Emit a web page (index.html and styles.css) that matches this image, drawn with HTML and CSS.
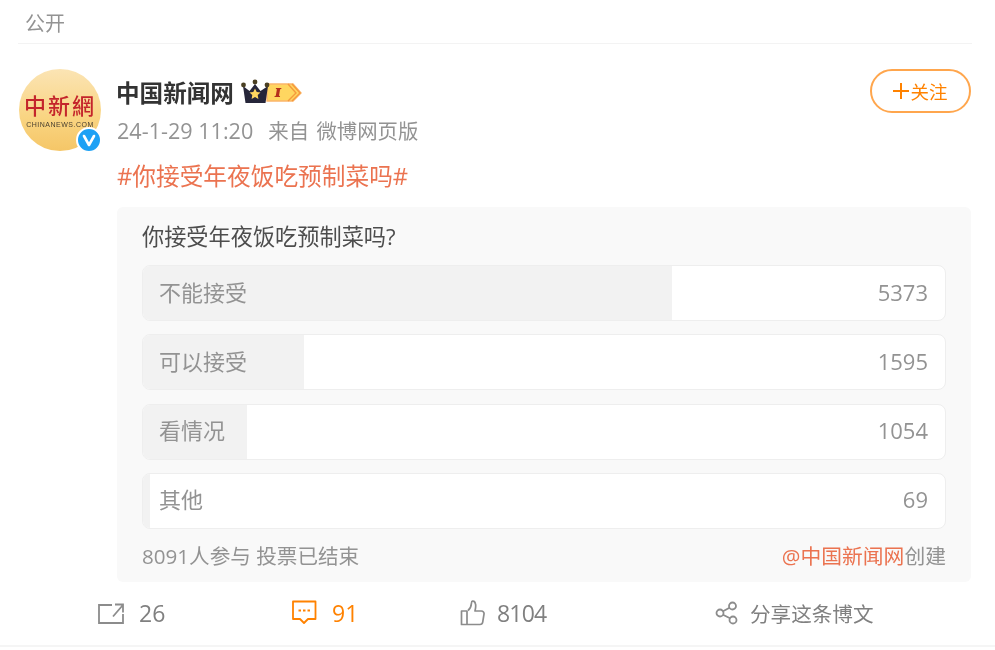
FILE: index.html
```html
<!DOCTYPE html>
<html lang="zh-CN">
<head>
    <meta charset="UTF-8">
    <title>中国新闻网</title>
    <link rel="stylesheet" href="styles.css">
</head>
<body>
    <div class="page">
        <div class="container">
            <div class="visibility">公开</div>

            <div class="post-head">
                <div class="avatar">
                    <div class="avatar-logo">中新網</div>
                    <div class="avatar-site">CHINANEWS.COM</div>
                    <div class="verified">
                        <svg width="18" height="18" viewBox="0 0 18 18"><path d="M4 5l5 9 5-9" fill="none" stroke="#fff" stroke-width="2.6" stroke-linejoin="round" stroke-linecap="round"/></svg>
                    </div>
                </div>
                <div class="author">
                    <div class="name-row">
                        <span class="name">中国新闻网</span>
                        <svg class="crown" width="62" height="26" viewBox="0 0 62 26">
                            <path d="M26 5h26l8 9-8 8H26z" fill="#ffd660" stroke="#fbb56a" stroke-width="1.4"/>
                            <path d="M51 5l8 9-8 8M47 5l8 9-8 8" fill="none" stroke="#f59a3c" stroke-width="1.400"/>
                            <path d="M2 7l6.500 5 5.500-7 5.500 7 7.500-5-2.500 17H4.500z" fill="#26263a"/>
                            <circle cx="2.500" cy="6" r="2.400" fill="#4a3f22"/>
                            <circle cx="14" cy="3" r="2.400" fill="#4a3f22"/>
                            <circle cx="26" cy="6" r="2.400" fill="#4a3f22"/>
                            <path d="M14 9.500l1.700 3.500 3.800.5-2.800 2.600.7 3.800-3.400-1.900-3.400 1.900.7-3.800-2.800-2.600 3.800-.5z" fill="#ffd660"/>
                            <path d="M35 9h5.500l-.3 1.100-1.100.2-1.100 6.400 1.100.2-.2 1.100H33.400l.3-1.100 1.100-.2 1.100-6.400-1.100-.2z" fill="#b5301c"/>
                        </svg>
                    </div>
                    <div class="meta"><span class="date">24-1-29 11:20</span><span class="source">来自 微博网页版</span></div>
                </div>
                <button class="follow" type="button"><span class="plus"></span>关注</button>
            </div>

            <div class="topic">#你接受年夜饭吃预制菜吗#</div>

            <div class="poll">
                <div class="poll-title">你接受年夜饭吃预制菜吗?</div>
                <div class="option">
                    <div class="option-fill" style="width: 65.9%"></div>
                    <span class="option-label">不能接受</span>
                    <span class="option-count">5373</span>
                </div>
                <div class="option">
                    <div class="option-fill" style="width: 20.1%"></div>
                    <span class="option-label">可以接受</span>
                    <span class="option-count">1595</span>
                </div>
                <div class="option">
                    <div class="option-fill" style="width: 13%"></div>
                    <span class="option-label">看情况</span>
                    <span class="option-count">1054</span>
                </div>
                <div class="option">
                    <div class="option-fill" style="width: 0.9%"></div>
                    <span class="option-label">其他</span>
                    <span class="option-count">69</span>
                </div>
                <div class="poll-foot">
                    <span>8091人参与 投票已结束</span>
                    <span class="creator"><span class="accent">@中国新闻网</span>创建</span>
                </div>
            </div>

            <div class="actions">
                <div class="action action-repost">
                    <svg width="28" height="26" viewBox="0 0 28 26" fill="none" stroke="#8c8c8c" stroke-width="1.800"><path d="M15 5H2v18h24V14"/><path d="M16 16.500L25.500 5.500M18 4.500h8v8"/></svg>
                    <span>26</span>
                </div>
                <div class="action action-comment">
                    <svg width="26" height="26" viewBox="0 0 26 26" fill="none" stroke="#ff8200" stroke-width="1.800" stroke-linejoin="round"><path d="M2 1.500h22.500v17.500H17l-4 4-4-4H2z"/><path d="M7.500 10.500h2.500M12 10.500h2.500M16.500 10.500h2.500"/></svg>
                    <span class="active">91</span>
                </div>
                <div class="action action-like">
                    <svg width="25" height="26" viewBox="0 0 25 26" fill="none" stroke="#8c8c8c" stroke-width="1.700" stroke-linejoin="round"><path d="M7 11h-5.500v13.500H7zM7 24.500h13c1.500 0 2.500-1 2.700-2.300l1.300-8c.3-1.800-.9-3.200-2.700-3.200h-6.300c.6-2.500 1-5 .5-7-.4-1.800-1.500-3-3-2.800-.9.100-1 1-1.100 2.300-.2 3-1.700 5.700-3.400 7"/></svg>
                    <span class="like-count">8104</span>
                </div>
                <div class="action action-share">
                    <svg width="24" height="24" viewBox="0 0 24 24" fill="none" stroke="#8c8c8c" stroke-width="1.800"><circle cx="17.500" cy="5" r="3.500"/><circle cx="5" cy="12" r="3.500"/><circle cx="18" cy="19" r="3.500"/><path d="M8 10.300l6.500-3.600M8 13.700l7 3.600"/></svg>
                    <span class="share-text">分享这条博文</span>
                </div>
            </div>
        </div>
    </div>
</body>
</html>
```

FILE: styles.css
```css
body {
    font-family: "Open Sans", "Noto Sans CJK SC", sans-serif;
    margin: 0;
    background: #fff;
    color: #333;
}
.page {
    height: 645px;
    border-bottom: 2px solid #f5f5f5;
    filter: blur(0.35px);
}
.container {
    width: 954px;
    margin-left: 18px;
}
.visibility {
    height: 42px;
    padding: 1px 0 0 7px;
    line-height: 46px;
    font-size: 20px;
    color: #939393;
    border-bottom: 1px solid #f3f3f3;
}
.post-head {
    display: flex;
    margin: 25px 1px 0 0;
    padding-left: 1px;
}
.avatar {
    position: relative;
    width: 82px;
    height: 82px;
    border-radius: 50%;
    background: linear-gradient(#fbe4b4, #f9d481 60%, #f5c667);
    display: flex;
    flex-direction: column;
    align-items: center;
    justify-content: center;
}
.avatar-logo {
    font-family: "Noto Sans CJK TC", sans-serif;
    font-weight: 500;
    font-size: 22px;
    line-height: 25px;
    letter-spacing: 2px;
    color: #c4252b;
    margin-bottom: 4px;
}
.avatar-site {
    font-family: "Liberation Sans", sans-serif;
    font-size: 7px;
    line-height: 8px;
    color: #4a4030;
    letter-spacing: 0.5px;
}
.verified {
    position: absolute;
    right: -1px;
    bottom: -2px;
    width: 22px;
    height: 22px;
    border: 2px solid #fff;
    border-radius: 50%;
    background: #1da1f5;
    display: flex;
    align-items: center;
    justify-content: center;
}
.author {
    flex: 1;
    margin-left: 15px;
}
.name-row {
    display: flex;
    align-items: center;
    height: 44px;
    margin-top: 1px;
}
.name {
    font-size: 23.600px;
    font-weight: 700;
    color: #333;
}
.crown {
    margin-left: 7px;
}
.meta {
    display: flex;
    align-items: baseline;
    gap: 15px;
    padding-left: 1px;
    font-size: 20.400px;
    line-height: 28px;
    color: #939393;
    margin-top: 3px;
}
.date {
    font-size: 21.600px;
}
.source {
    word-spacing: 2px;
}
.follow {
    width: 101px;
    height: 44px;
    font-family: inherit;
    font-size: 18.500px;
    color: #ff8200;
    background: #fff;
    border: 2px solid #ffa64d;
    border-radius: 22px;
    padding: 0;
    display: flex;
    align-items: center;
    justify-content: center;
}
.plus {
    width: 16px;
    height: 16px;
    margin-right: 1px;
    background:
        linear-gradient(#ff8200, #ff8200) center / 16px 2px no-repeat,
        linear-gradient(#ff8200, #ff8200) center / 2px 16px no-repeat;
}
.topic {
    margin: 9px 0 0 99px;
    font-size: 23.700px;
    line-height: 32px;
    color: #eb7350;
}
.poll {
    margin: 15px 1px 0 99px;
    height: 375px;
    box-sizing: border-box;
    padding: 14px 25px 0;
    background: #f9f9f9;
    border-radius: 6px;
}
.poll-title {
    font-size: 22.200px;
    line-height: 32px;
    color: #4d4d4d;
    margin-bottom: 12px;
}
.option {
    position: relative;
    height: 54px;
    margin-bottom: 13.300px;
    border: 1px solid #eeeeee;
    border-radius: 8px;
    background: #fff;
    overflow: hidden;
    display: flex;
    align-items: center;
    justify-content: space-between;
    padding: 0 17px 0 16px;
    font-size: 22px;
    color: #939393;
}
.option-fill {
    position: absolute;
    left: 0;
    top: 0;
    bottom: 0;
    background: #f2f2f2;
}
.option-label, .option-count {
    position: relative;
}
.option-label {
    margin-bottom: 5px;
}
.option-count {
    margin-bottom: 3px;
}
.poll-foot {
    display: flex;
    justify-content: space-between;
    font-size: 20.600px;
    line-height: 28px;
    color: #939393;
    margin-top: 1px;
}
.creator {
    font-size: 20.800px;
}
.accent {
    color: #eb7350;
}
.actions {
    display: flex;
    align-items: center;
    height: 62px;
    padding-left: 79px;
    font-size: 23px;
    color: #808080;
}
.action {
    display: flex;
    align-items: center;
}
.action-repost {
    width: 194px;
    gap: 14px;
}
.action-comment {
    width: 169px;
    gap: 15px;
}
.action-like {
    width: 255px;
    gap: 12px;
}
.action-share {
    gap: 11px;
}
.like-count {
    letter-spacing: -0.800px;
}
.active {
    color: #ff8200;
}
.share-text {
    font-size: 20.600px;
}
```
